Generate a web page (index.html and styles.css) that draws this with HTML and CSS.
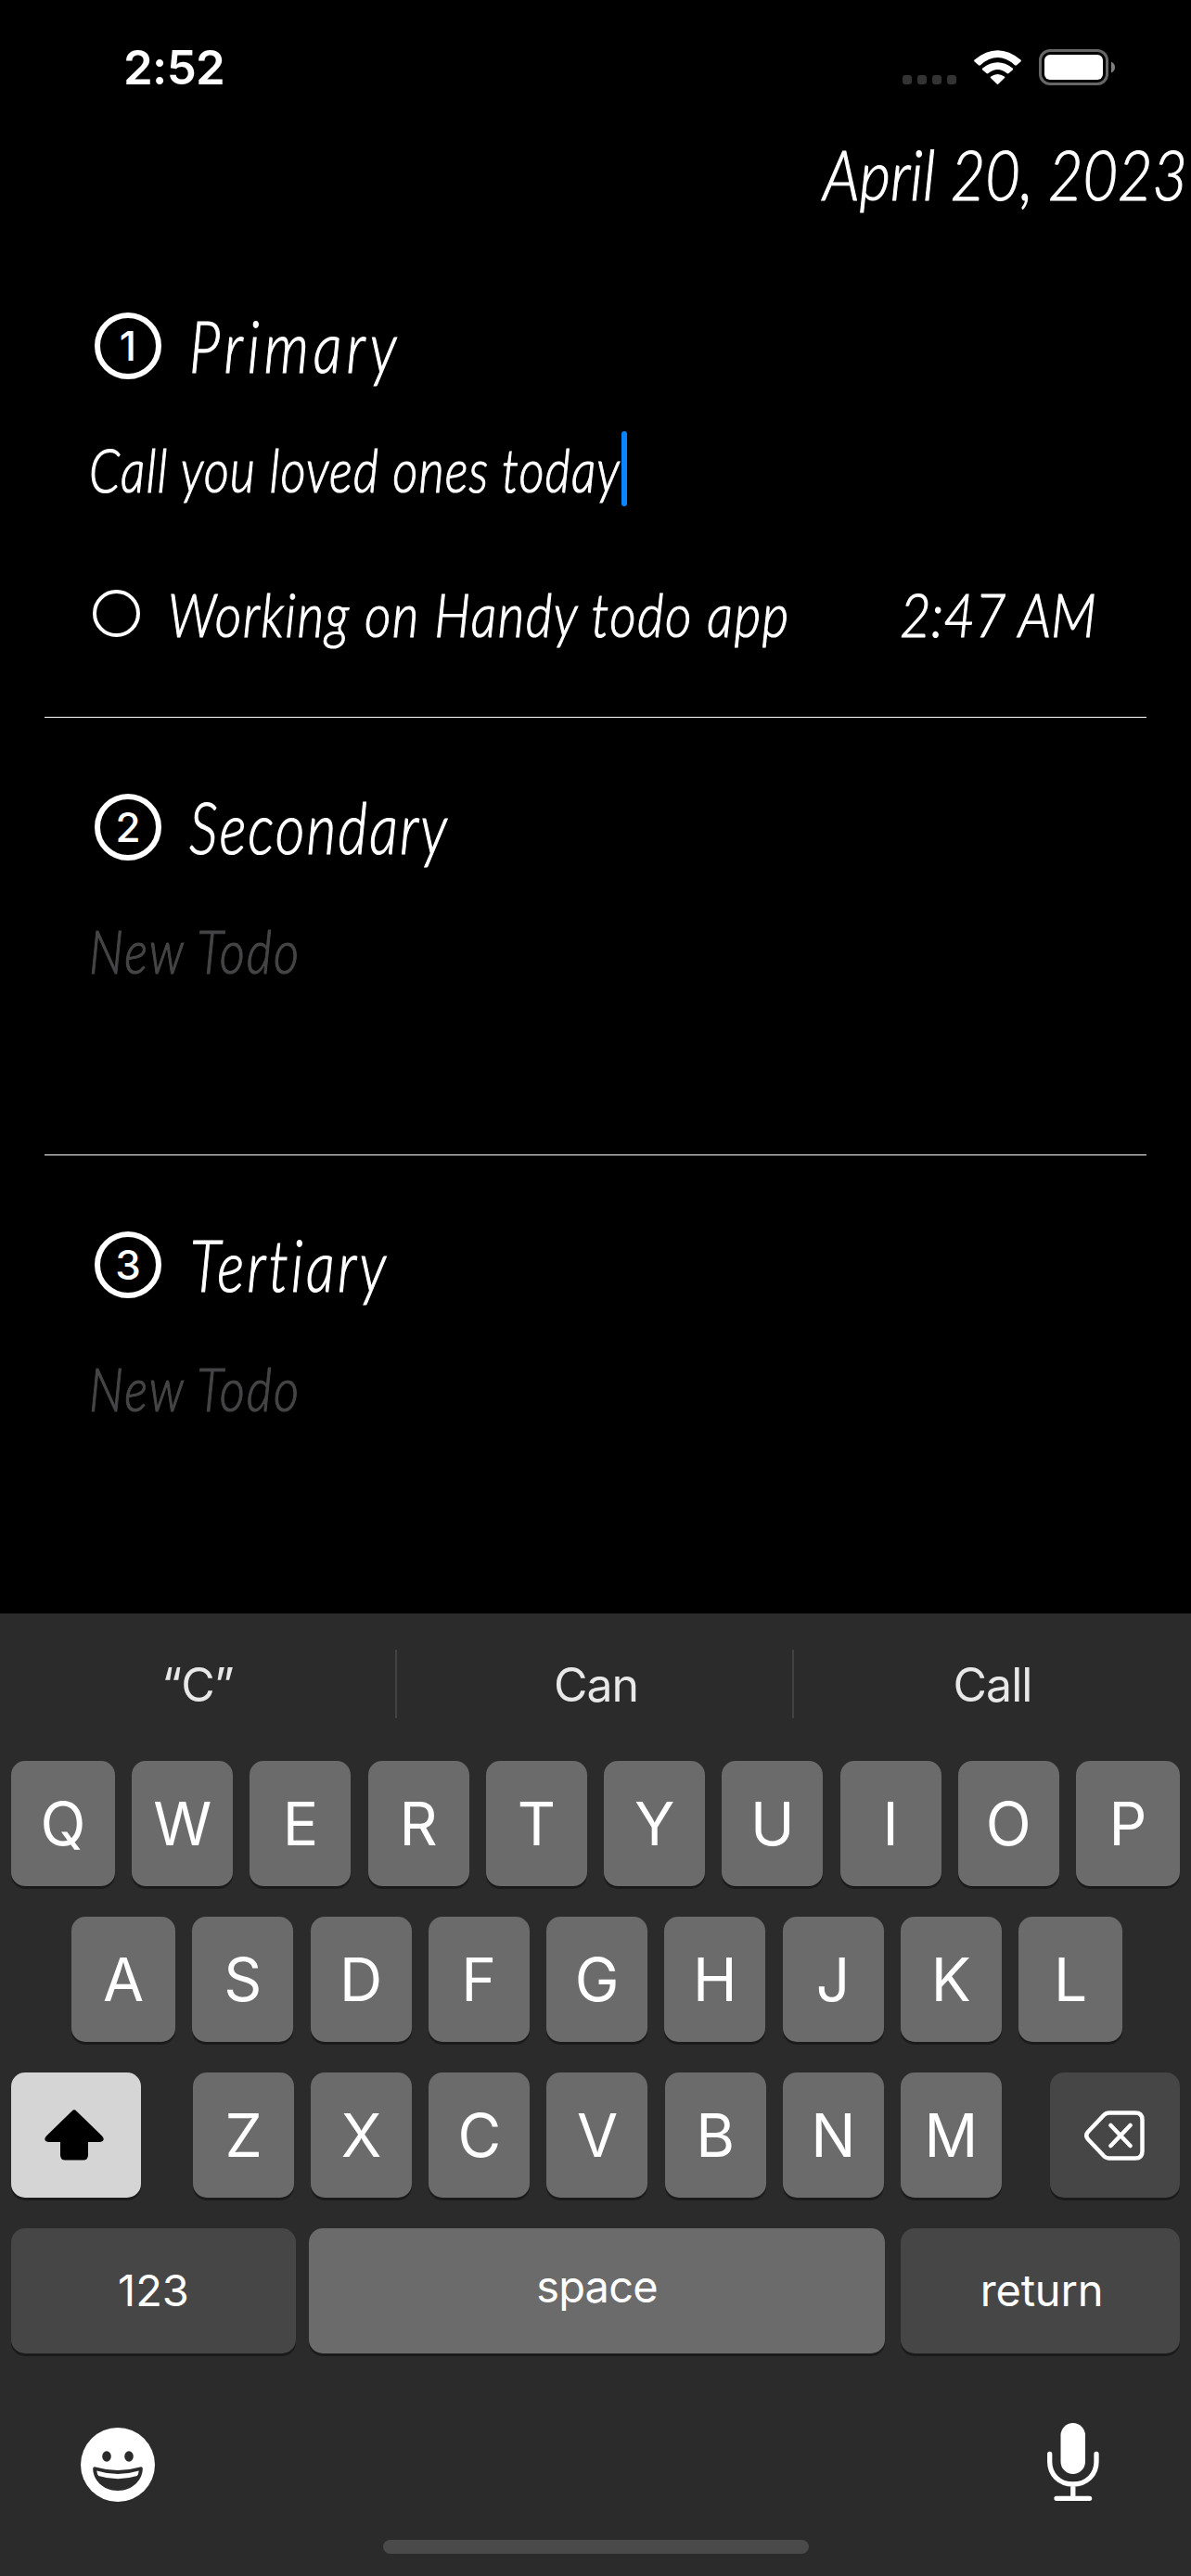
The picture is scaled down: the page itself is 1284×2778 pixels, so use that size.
FILE: index.html
```html
<!DOCTYPE html>
<html lang="en">
<head>
<meta charset="utf-8">
<title>Handy Todo</title>
<link rel="stylesheet" href="styles.css">
</head>
<body>
<div class="screen">
  <header class="status">
    <span class="clock">2:52</span>
    <div class="indicators">
      <div class="dots"><i></i><i></i><i></i><i></i></div>
      <svg class="wifi" width="51" height="38" viewBox="0 0 51 38">
        <path fill="#fff" d="M0.6 10.6Q-.3 11.6.6 12.5L5 16.3Q6 17.1 7 16.2Q25.500 0 44 16.200Q45 17.100 46 16.300L50.400 12.500Q51.300 11.600 50.400 10.600Q25.500-10 .6 10.600ZM9.300 19.500Q8.400 20.500 9.300 21.400L13.500 25Q14.500 25.800 15.500 25Q25.500 17.200 35.500 25Q36.500 25.800 37.500 25L41.700 21.400Q42.600 20.500 41.700 19.500Q25.500 7.200 9.300 19.500ZM18.200 28.400Q17.300 29.400 18.200 30.300L24.600 36.600Q25.500 37.400 26.400 36.600L32.800 30.300Q33.700 29.400 32.800 28.400Q25.500 23.400 18.200 28.400Z"/>
      </svg>
      <svg class="battery" width="83" height="39" viewBox="0 0 83 39">
        <rect x="1.500" y="1.500" width="72" height="36" rx="10.500" fill="none" stroke="#666" stroke-width="3"/>
        <rect x="6" y="6" width="63" height="27" rx="6" fill="#fff"/>
        <path d="M78 13.500Q82 15.500 82 19.500Q82 23.500 78 25.500Z" fill="#808080"/>
      </svg>
    </div>
  </header>
  <div class="date"><span class="hand">April 20, 2023</span></div>

  <main class="lists">
    <section class="list primary">
      <h2 class="head"><span class="num">1</span><span class="hand title">Primary</span></h2>
      <div class="entry"><span class="hand value">Call you loved ones today</span><i class="caret"></i></div>
      <div class="task"><i class="check"></i><span class="hand label">Working on Handy todo app</span><span class="hand time">2:47 AM</span></div>
    </section>
    <section class="list secondary">
      <h2 class="head"><span class="num">2</span><span class="hand title">Secondary</span></h2>
      <div class="entry"><span class="hand hint">New Todo</span></div>
    </section>
    <section class="list tertiary">
      <h2 class="head"><span class="num">3</span><span class="hand title">Tertiary</span></h2>
      <div class="entry"><span class="hand hint">New Todo</span></div>
    </section>
  </main>

  <div class="keyboard">
    <div class="suggest"><span>“C”</span><span>Can</span><span>Call</span></div>
    <div class="row"><b class="key edge">Q</b><b class="key">W</b><b class="key">E</b><b class="key">R</b><b class="key">T</b><b class="key">Y</b><b class="key">U</b><b class="key">I</b><b class="key">O</b><b class="key edge">P</b></div>
    <div class="row middle"><b class="key edge">A</b><b class="key">S</b><b class="key">D</b><b class="key">F</b><b class="key">G</b><b class="key">H</b><b class="key">J</b><b class="key">K</b><b class="key edge">L</b></div>
    <div class="row">
      <b class="key wide shift"><svg width="66" height="56" viewBox="0 0 66 56"><path d="M30.700 1.400Q33-.8 35.300 1.400L63 28.500Q65.500 31.200 64.300 33.200Q63.300 35 60.500 35H48V49Q48 54.500 42.500 54.500H23.500Q18 54.500 18 49V35H5.500Q2.700 35 1.700 33.200Q.5 31.200 3 28.500Z"/></svg></b>
      <div class="letters"><b class="key">Z</b><b class="key">X</b><b class="key">C</b><b class="key">V</b><b class="key">B</b><b class="key">N</b><b class="key">M</b></div>
      <b class="key wide dark"><svg width="66" height="56" viewBox="0 0 66 56" fill="none" stroke="#fff" stroke-width="4.500" stroke-linecap="round" stroke-linejoin="round"><path d="M27 3.500H55Q62.500 3.500 62.500 11V45Q62.500 52.500 55 52.500H27Q23.500 52.500 21 50L4 32Q.5 28 4 24L21 6Q23.500 3.500 27 3.500ZM28.500 17L49.500 39M49.500 17L28.500 39"/></svg></b>
    </div>
    <div class="row commands"><b class="key dark num-key">123</b><b class="key space"><span>space</span></b><b class="key dark return">return</b></div>
    <div class="tools">
      <svg width="80" height="80" viewBox="0 0 80 80">
        <circle cx="40" cy="40" r="40" fill="#fff"/>
        <g fill="#2b2b2b"><ellipse cx="28" cy="31" rx="4.800" ry="5.700"/><ellipse cx="52" cy="31" rx="4.800" ry="5.700"/>
        <path d="M13.200 44Q13.500 41.800 16 42.500Q40 49.500 64 42.500Q66.500 41.800 66.800 44C67 55 57 68 40 68S13 55 13.200 44Z"/></g>
        <path fill="#fff" d="M17.300 46.500Q40 53.500 62.700 46.500Q62.500 50 60.800 52Q40 58.500 19.200 52Q17.500 50 17.300 46.500Z"/>
      </svg>
      <svg width="56" height="84" viewBox="0 0 56 84" fill="none" stroke="#fff" stroke-width="5.300" stroke-linecap="round">
        <rect x="14.500" y="0" width="26.500" height="55" rx="13.250" fill="#fff" stroke="none"/>
        <path d="M2.700 33.500V42C2.700 55.500 13 66 27.800 66S53 55.500 53 42V33.500M27.800 66V81M10 81.300H45.600"/>
      </svg>
    </div>
    <i class="home"></i>
  </div>
</div>
</body>
</html>
```
FILE: styles.css
```css
* { box-sizing: border-box; }
body { margin: 0; background: #000; }
i, b { display: block; font-style: normal; font-weight: 400; }

.screen {
  width: 1284px;
  height: 2778px;
  display: flex;
  flex-direction: column;
  overflow: hidden;
  color: #fff;
  font-family: Inter, "Liberation Sans", sans-serif;
}

/* Status bar */
.status {
  height: 139px;
  padding: 43px 81px 0 133px;
  display: flex;
  justify-content: space-between;
}
.clock { font-size: 51px; line-height: 60px; font-weight: 600; letter-spacing: -0.7px; }
.indicators { display: flex; align-items: flex-start; padding-top: 10px; }
.dots { display: flex; gap: 6px; padding-top: 28px; margin-right: 19px; }
.dots i { width: 10px; height: 10px; border-radius: 3px; background: #333; }
.wifi { margin: 1px 19px 0 0; }

/* Handwritten text: light, slanted and narrow */
.hand {
  display: inline-block;
  font-family: Lato, "Liberation Sans", sans-serif;
  font-style: italic;
  font-weight: 300;
  font-variant-ligatures: none;
  -webkit-text-stroke: 1.2px currentColor;
  white-space: nowrap;
  transform: translateY(2px) scaleX(var(--narrow, .8));
  transform-origin: left;
}
.date { height: 116px; padding-right: 4px; text-align: right; font-size: 74px; line-height: 93px; }
.date .hand { --narrow: .875; transform-origin: right; }

/* Todo lists */
.lists { height: 1485px; padding: 0 48px; display: flex; flex-direction: column; }
.list { padding: 82px 54px 0 48px; border-bottom: 1px solid #fff; }
.primary { height: 519px; }
.secondary { height: 472px; }
.tertiary { flex: 1; border: 0; }
.head { margin: 0; height: 72px; padding-left: 6px; display: flex; gap: 30px; font-weight: 400; }
.num {
  width: 72px;
  height: 72px;
  border: 6px solid #fff;
  border-radius: 50%;
  text-align: center;
  font-size: 44px;
  line-height: 60px;
  font-weight: 500;
}
.title { font-size: 77px; line-height: 66px; }
.primary .title { letter-spacing: 6.2px; }
.secondary .title { letter-spacing: 2.6px; }
.tertiary .title { letter-spacing: 4px; margin-left: 1px; }
.entry { height: 81px; margin-top: 56px; display: flex; }
.value, .hint { font-size: 66px; line-height: 78px; }
.value { width: 574px; letter-spacing: 1.3px; }
.hint { color: #454547; letter-spacing: 2.4px; }
.caret { width: 6px; border-radius: 3px; background: #0a84ff; }
.task { height: 51px; margin-top: 90px; padding-left: 4px; display: flex; font-size: 66px; line-height: 48px; }
.check { width: 51px; height: 51px; border: 4px solid #fff; border-radius: 50%; margin-right: 30px; }
.label { flex: 1; width: 0; letter-spacing: 1.7px; --narrow: .84; }
.time { transform-origin: right; --narrow: .88; }

/* Keyboard */
.keyboard { height: 1038px; background: #2b2b2b; }
.suggest {
  height: 159px;
  padding-top: 39px;
  display: grid;
  grid-template-columns: 428px 428px 428px;
  text-align: center;
  font-size: 50px;
  line-height: 76px;
  letter-spacing: -1px;
  color: #e8e8e8;
}
.suggest span { height: 74px; }
.suggest span:not(:last-child) { border-right: 2px solid #424242; }
.suggest span:nth-child(2) { padding-left: 3px; }
.row { height: 135px; margin-bottom: 33px; padding: 0 12px; display: flex; justify-content: space-between; }
.middle { padding: 0 74px 0 77px; }
.key {
  width: 109px;
  height: 135px;
  display: flex;
  align-items: center;
  justify-content: center;
  border-radius: 15px;
  background: #6b6b6b;
  box-shadow: 0 3px 0 #1b1b1b;
  font-size: 64px;
  line-height: 135px;
}
.edge { width: 112px; }
.wide { width: 140px; }
.shift { padding-right: 4px; }
.letters { width: 872px; margin-left: 4px; display: flex; justify-content: space-between; }
.shift { background: #d5d5d5; }
.dark { background: #464646; }
.commands .key { font-size: 47px; line-height: 133px; align-items: flex-start; }
.commands .num-key { width: 307px; }
.commands .space { width: 621px; margin-right: 3px; letter-spacing: -.8px; }
.space span { position: relative; top: -4px; }
.commands .return { width: 301px; padding-left: 3px; letter-spacing: -.2px; }
.tools { height: 168px; padding: 42px 99px 0 87px; display: flex; justify-content: space-between; align-items: flex-start; }
.tools svg:first-child { margin-top: 5px; }
.home { width: 459px; height: 15px; margin: 0 auto; border-radius: 8px; background: #4a4a4a; }
```
